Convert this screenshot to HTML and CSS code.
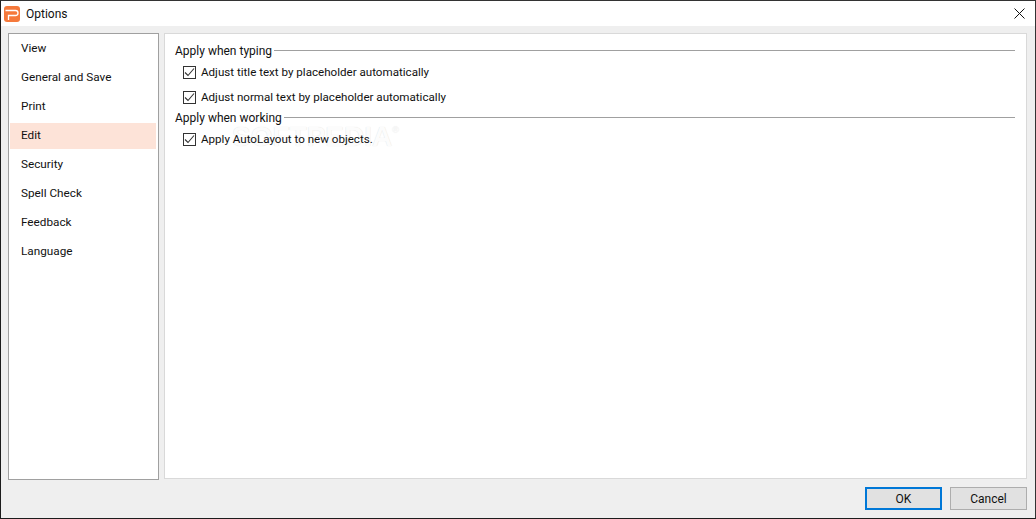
FILE: index.html
```html
<!DOCTYPE html>
<html lang="en">
<head>
<meta charset="utf-8">
<title>Options</title>
<link rel="stylesheet" href="styles.css">
</head>
<body>
<div class="window">
  <header class="titlebar">
    <svg class="app-icon" width="16" height="16" viewBox="0 0 16 16">
      <rect width="16" height="16" rx="3" fill="#f5793b"/>
      <path d="M1.5 4.5H11.5A2.5 2.5 0 0 1 11.5 9.5H4.5V14" fill="none" stroke="#fff" stroke-width="1.3"/>
    </svg>
    <span class="title">Options</span>
    <svg class="close" width="11" height="11" viewBox="0 0 11 11">
      <path d="M.5.5 10.5 10.5M10.5.5.5 10.5" stroke="#111" stroke-width="1" fill="none"/>
    </svg>
  </header>
  <div class="body">
    <div class="panels">
      <nav class="nav">
        <div class="nav-item">View</div>
        <div class="nav-item">General and Save</div>
        <div class="nav-item">Print</div>
        <div class="nav-item active">Edit</div>
        <div class="nav-item">Security</div>
        <div class="nav-item">Spell Check</div>
        <div class="nav-item">Feedback</div>
        <div class="nav-item">Language</div>
      </nav>
      <main class="content">
        <span class="watermark">SOFTPEDIA<span class="reg">®</span></span>
        <div class="group-head"><span>Apply when typing</span><i class="rule"></i></div>
        <label class="check first"><span class="box"><svg width="13" height="13" viewBox="0 0 13 13"><path d="M2 6.5 5 9.5 11 2.5" fill="none" stroke="#333" stroke-width="1.1"/></svg></span>Adjust title text by placeholder automatically</label>
        <label class="check second"><span class="box"><svg width="13" height="13" viewBox="0 0 13 13"><path d="M2 6.5 5 9.5 11 2.5" fill="none" stroke="#333" stroke-width="1.1"/></svg></span>Adjust normal text by placeholder automatically</label>
        <div class="group-head working"><span>Apply when working</span><i class="rule"></i></div>
        <label class="check third"><span class="box"><svg width="13" height="13" viewBox="0 0 13 13"><path d="M2 6.5 5 9.5 11 2.5" fill="none" stroke="#333" stroke-width="1.1"/></svg></span>Apply AutoLayout to new objects.</label>
      </main>
    </div>
    <footer class="buttons">
      <button class="btn default">OK</button>
      <button class="btn">Cancel</button>
    </footer>
  </div>
</div>
</body>
</html>
```

FILE: styles.css
```css
* { box-sizing: border-box; }
html, body { margin: 0; height: 100%; }
body { width: 1036px; height: 519px; overflow: hidden; font-family: Roboto, "Noto Sans", sans-serif; font-size: 12px; color: #111; }
.window { width: 1036px; height: 519px; display: flex; flex-direction: column; border: 1px solid #1c1c1c; border-top-color: #333; border-right-color: #333; background: #fff; }
.titlebar { height: 25px; flex: none; display: flex; align-items: center; padding-left: 3px; padding-right: 10px; background: #fff; }
.app-icon { flex: none; margin-top: 1px; }
.title { margin-left: 6px; font-size: 12px; }
.close { margin-left: auto; }
.body { flex: 1; display: flex; flex-direction: column; background: #efefef; padding: 7px 8px 7px 7px; min-height: 0; }
.panels { display: flex; gap: 5px; height: 447px; flex: none; align-items: flex-start; }
.nav { width: 151px; flex: none; border: 1px solid #a0a0a0; background: #fff; padding-top: 2px; height: 447px; font-size: 11.75px; }
.nav-item { height: 26px; margin: 0 2px 3px 1px; padding-left: 11px; display: flex; align-items: center; padding-bottom: 2px; }
.nav-item.active { background: #fde3d8; }
.content { flex: 1; position: relative; border: 1px solid #d9d9d9; background: #fff; height: 446px; padding: 9px 11px 0 10px; }
.group-head { display: flex; align-items: center; height: 16px; }
.group-head.working { margin-top: 5px; }
.rule { flex: 1; height: 1px; background: #a0a0a0; margin-left: 2px; margin-top: -1px; }
.check { display: flex; align-items: center; height: 16px; padding-left: 8px; font-size: 11.6px; }
.check.first { margin-top: 5px; }
.check.second { margin-top: 9px; }
.check.third { margin-top: 5px; }
.box { width: 13px; height: 13px; border: 1px solid #333; margin-right: 5px; flex: none; background: #fff; display: flex; align-items: center; justify-content: center; }
.box svg { flex: none; }
.watermark { position: absolute; left: 67px; top: 87px; font-family: "Liberation Sans", sans-serif; font-size: 28px; font-weight: 700; color: #fcfcfc; text-shadow: 0 0 1px #dcdcdc; z-index: 0; white-space: nowrap; }
.reg { font-size: 9px; font-weight: 400; vertical-align: 13px; }
.group-head, .check { position: relative; z-index: 1; }
.buttons { display: flex; justify-content: flex-end; gap: 8px; margin-top: 7px; }
.btn { width: 77px; height: 23px; padding: 0; border: 1px solid #adadad; background: #e1e1e1; font: inherit; color: #111; }
.btn.default { border: 2px solid #0078d7; }
```
